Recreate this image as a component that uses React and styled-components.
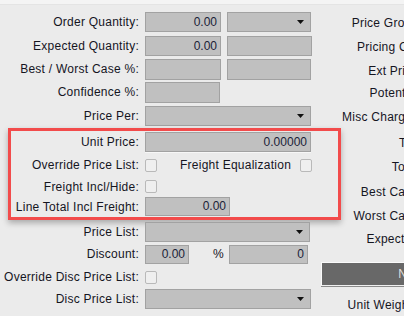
import React from 'react';
import styled, { createGlobalStyle } from 'styled-components';

const GlobalStyle = createGlobalStyle`
    html, body {
        margin: 0;
        padding: 0;
        width: 404px;
        height: 316px;
        overflow: hidden;
        background: #ebebeb;
    }
    body {
        font-family: "Liberation Sans", Arial, sans-serif;
        font-size: 12px;
        letter-spacing: 0.25px;
        color: #15151f;
    }
`;

function App() {
    return (
        <>
            <GlobalStyle />
            <Page>
                <TopStrip />
                <Columns>
                    <LeftCol>
                        <Row $h={25}>
                            <Label>Order Quantity:</Label>
                            <NumBox $w={76}>0.00</NumBox>
                            <Select $w={84} />
                        </Row>
                        <Row $h={24}>
                            <Label>Expected Quantity:</Label>
                            <NumBox $w={76}>0.00</NumBox>
                            <NumBox $w={85} />
                        </Row>
                        <Row $h={22}>
                            <Label>Best / Worst Case %:</Label>
                            <NumBox $w={76} $ih={21} />
                            <NumBox $w={84} $ih={21} />
                        </Row>
                        <Row $h={24}>
                            <Label>Confidence %:</Label>
                            <NumBox $w={75} $ih={21} />
                        </Row>
                        <Row $h={24}>
                            <Label>Price Per:</Label>
                            <Select $w={166} />
                        </Row>

                        <HighlightBox>
                            <Row $h={22}>
                                <Label $w={128}>Unit Price:</Label>
                                <NumBox $w={166} $lit>0.00000</NumBox>
                            </Row>
                            <Row $h={24}>
                                <Label $w={128}>Override Price List:</Label>
                                <Check />
                                <InlineText>Freight Equalization</InlineText>
                                <Check />
                            </Row>
                            <Row $h={19}>
                                <Label $w={128}>Freight Incl/Hide:</Label>
                                <Check />
                            </Row>
                            <Row $h={21}>
                                <Label $w={128}>Line Total Incl Freight:</Label>
                                <NumBox $w={85} $ih={19}>0.00</NumBox>
                            </Row>
                        </HighlightBox>

                        <Row $h={23}>
                            <Label>Price List:</Label>
                            <Select $w={165} />
                        </Row>
                        <Row $h={22}>
                            <Label>Discount:</Label>
                            <NumBox $w={44} $ih={19}>0.00</NumBox>
                            <Percent>%</Percent>
                            <NumBox $w={79} $ih={19}>0</NumBox>
                        </Row>
                        <Row $h={24}>
                            <Label>Override Disc Price List:</Label>
                            <Check />
                        </Row>
                        <Row $h={20}>
                            <Label>Disc Price List:</Label>
                            <Select $w={166} />
                        </Row>
                    </LeftCol>

                    <RightCol>
                        <RLabel $h={25}>Price Group:</RLabel>
                        <RLabel $h={24}>Pricing Cat:</RLabel>
                        <RLabel $h={23}>Ext Price:</RLabel>
                        <RLabel $h={22}>Potential:</RLabel>
                        <RLabel $h={26}>Misc Charges:</RLabel>
                        <RLabel $h={25}>Tax:</RLabel>
                        <RLabel $h={24}>Total:</RLabel>
                        <RLabel $h={25}>Best Case:</RLabel>
                        <RLabel $h={23}>Worst Case:</RLabel>
                        <RLabel $h={23}>Expected:</RLabel>
                        <DarkButton>Notes</DarkButton>
                        <RLabel $h={22} $mt={8}>Unit Weights:</RLabel>
                    </RightCol>
                </Columns>
            </Page>
        </>
    );
}

function Select({ $w }) {
    return (
        <SelectBox $w={$w}>
            <svg width="7" height="4" viewBox="0 0 7 4">
                <path d="M0 0 H7 L3.5 4 Z" fill="#111" />
            </svg>
        </SelectBox>
    );
}

export default App;

const Page = styled.div`
    width: 404px;
    height: 316px;
    overflow: hidden;
    position: relative;
`;

const TopStrip = styled.div`
    height: 4px;
    background: #f4f4f4;
    border-bottom: 1px solid #e4e4e4;
`;

const Columns = styled.div`
    display: flex;
    align-items: flex-start;
`;

const LeftCol = styled.div`
    width: 321px;
    flex-shrink: 0;
    padding-top: 4px;
    display: flex;
    flex-direction: column;
`;

const Row = styled.div`
    display: flex;
    align-items: center;
    gap: 6px;
    height: ${p => p.$h}px;
`;

const Label = styled.div`
    width: ${p => p.$w || 139}px;
    flex-shrink: 0;
    text-align: right;
    white-space: nowrap;
`;

const NumBox = styled.div`
    box-sizing: border-box;
    width: ${p => p.$w}px;
    height: ${p => p.$ih || 20}px;
    background: #c0c0c0;
    border: 1px solid #a2a2a2;
    color: #1a2238;
    text-align: right;
    padding-right: 3px;
    letter-spacing: 0;
    line-height: ${p => (p.$ih || 20) - 2}px;
    box-shadow: ${p => (p.$lit ? '0 1px 0 #f7f7f7' : 'none')};
`;

const SelectBox = styled.div`
    box-sizing: border-box;
    width: ${p => p.$w}px;
    height: 20px;
    background: #c0c0c0;
    border: 1px solid #a2a2a2;
    display: flex;
    align-items: center;
    justify-content: flex-end;
    padding-right: 6px;
`;

const Check = styled.div`
    box-sizing: border-box;
    width: 12px;
    height: 13px;
    background: #efefef;
    border: 1px solid #b9b9b9;
    border-radius: 2px;
`;

const InlineText = styled.span`
    margin-left: 17px;
    margin-right: 3px;
    white-space: nowrap;
`;

const Percent = styled.span`
    margin-left: 18px;
    width: 10px;
`;

const HighlightBox = styled.div`
    box-sizing: border-box;
    width: 333px;
    margin-left: 8px;
    border: 3px solid #f24b4b;
    box-shadow: 0 3px 6px rgba(0, 0, 0, 0.28);
    display: flex;
    flex-direction: column;
`;

const RightCol = styled.div`
    flex-shrink: 0;
    width: 200px;
    padding-top: 5px;
    display: flex;
    flex-direction: column;
`;

const RLabel = styled.div`
    width: 101px;
    height: ${p => p.$h}px;
    margin-top: ${p => p.$mt || 0}px;
    display: flex;
    align-items: center;
    justify-content: flex-end;
    white-space: nowrap;
`;

const DarkButton = styled.div`
    box-sizing: border-box;
    margin-top: 12px;
    width: 186px;
    height: 24px;
    background: #686868;
    color: #dedede;
    border-top: 1px solid #fafafa;
    border-left: 1px solid #fafafa;
    border-bottom: 1px solid #f0f0f0;
    box-shadow: 0 1px 0 #8a8a8a;
    display: flex;
    align-items: center;
    justify-content: center;
`;
